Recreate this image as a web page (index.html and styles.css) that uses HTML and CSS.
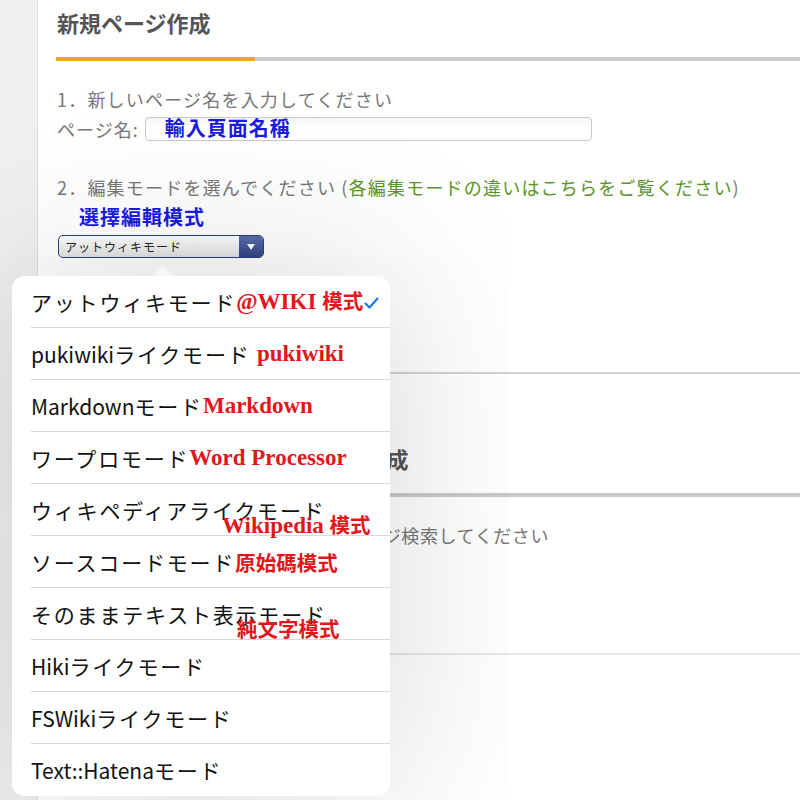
FILE: index.html
```html
<!DOCTYPE html>
<html lang="ja">
<head>
<meta charset="utf-8">
<title>新規ページ作成</title>
<link rel="stylesheet" href="styles.css">
</head>
<body>
<div class="page">
  <div class="side"></div>
  <main class="main">
    <section class="card card-first">
      <h2 class="card-title">新規ページ作成</h2>
      <div class="bar bar-progress"></div>
      <p class="step">1．新しいページ名を入力してください</p>
      <div class="name-row">
        <span class="label">ページ名:</span>
        <div class="input"><span class="note-blue">輸入頁面名稱</span></div>
      </div>
      <p class="step step-two">2．編集モードを選んでください (<span class="link">各編集モードの違いはこちらをご覧ください</span>)</p>
      <div class="note-blue note-mode">選擇編輯模式</div>
      <div class="select">
        <span class="select-text">アットウィキモード</span>
        <span class="select-btn"><svg width="10" height="8" viewBox="0 0 10 8"><path d="M1 1 H9 L5 7 Z" fill="#fff"/></svg></span>
      </div>
    </section>
    <section class="card card-second">
      <h2 class="card-title">既存ページの検索・編集・新規作成</h2>
      <div class="bar"></div>
      <p class="step step-search">1．ページ名を入力するか、またはページ検索してください</p>
    </section>
  </main>
</div>

<div class="popover">
  <div class="pop-arrow"></div>
  <ul class="menu">
    <li class="item">アットウィキモード<span class="red">@WIKI <span class="zh">模式</span></span><svg class="check" width="15" height="12" viewBox="0 0 15 12"><path d="M1.5 6.5 L5.5 10.5 L13.5 1.5" fill="none" stroke="#1a7be8" stroke-width="2.2" stroke-linecap="round" stroke-linejoin="round"/></svg></li>
    <li class="item"><span class="lat">pukiwiki</span>ライクモード <span class="red">pukiwiki</span></li>
    <li class="item"><span class="lat">Markdown</span>モード<span class="red">Markdown</span></li>
    <li class="item">ワープロモード<span class="red">Word Processor</span></li>
    <li class="item">ウィキペディアライクモード<span class="red red-float red-wiki">Wikipedia <span class="zh">模式</span></span></li>
    <li class="item">ソースコードモード<span class="red zh red-low">原始碼模式</span></li>
    <li class="item">そのままテキスト表示モード<span class="red zh red-float red-text">純文字模式</span></li>
    <li class="item"><span class="lat">Hiki</span>ライクモード</li>
    <li class="item"><span class="lat">FSWiki</span>ライクモード</li>
    <li class="item item-last"><span class="lat">Text::Hatena</span>モード</li>
  </ul>
</div>
</body>
</html>
```

FILE: styles.css
```css
* { box-sizing: border-box; }

html, body {
  margin: 0;
  padding: 0;
  height: 800px;
  overflow: hidden;
}

body {
  background: #efefef;
  font-family: "Noto Sans CJK JP", "Noto Sans", sans-serif;
  position: relative;
}

.page {
  display: flex;
  min-height: 800px;
}

.side {
  width: 37px;
  flex: none;
  background: #f0f0f0;
}

.main {
  flex: 1;
  background: #ffffff;
  border-left: 1px solid #dcdcdc;
}

.card {
  padding-left: 18px;
}

.card-first {
  padding-top: 8px;
  padding-bottom: 114px;
  border-bottom: 2px solid #d3d3d3;
}

.card-second {
  padding-top: 70px;
  padding-bottom: 106px;
  border-bottom: 2px solid #e6e6e6;
}

.card-title {
  margin: 0;
  font-size: 22px;
  line-height: 28px;
  font-weight: 700;
  color: #555555;
  padding-left: 1px;
}

.bar {
  margin-top: 21px;
  height: 4px;
  background: #cacaca;
}

.bar-progress {
  background: linear-gradient(to right, #f2a61c 0, #f2a61c 199px, #cdcdcd 199px);
}

.step {
  margin: 26px 0 0;
  font-size: 18px;
  line-height: 24px;
  letter-spacing: 1.2px;
  color: #777777;
  padding-left: 1px;
}

.step-search {
  letter-spacing: 0.6px;
}

.step-two {
  margin-top: 33px;
}

.link {
  color: #5b9526;
}

.name-row {
  display: flex;
  align-items: center;
  gap: 6px;
  margin-top: 5px;
  height: 26px;
  padding-left: 1px;
}

.label {
  font-size: 18px;
  letter-spacing: 1px;
  color: #777777;
}

.input {
  width: 447px;
  height: 24px;
  border: 1px solid #cacaca;
  border-radius: 4px;
  background: linear-gradient(#f4f4f4, #ffffff 40%);
  padding-left: 19px;
  display: flex;
  align-items: center;
  overflow: visible;
}

.note-blue {
  font-family: "Liberation Serif", "Noto Sans CJK TC", serif;
  font-weight: 700;
  color: #1b1be3;
  font-size: 20px;
  line-height: 26px;
  letter-spacing: 1px;
}

.note-mode {
  margin-top: 6px;
  padding-left: 23px;
}

.select {
  margin-top: 4px;
  margin-left: 2px;
  width: 206px;
  height: 23px;
  border: 1px solid #2f3f78;
  border-radius: 5px;
  background: linear-gradient(#ffffff, #e2e2e2);
  display: flex;
  align-items: center;
  overflow: hidden;
}

.select-text {
  flex: 1;
  padding-left: 6px;
  font-size: 12px;
  letter-spacing: 1px;
  color: #222222;
}

.select-btn {
  width: 24px;
  height: 100%;
  background: linear-gradient(#5b6fae, #2f4284);
  display: flex;
  align-items: center;
  justify-content: center;
}

/* popover menu */
.popover {
  position: absolute;
  left: 12px;
  top: 276px;
  width: 378px;
  background: #ffffff;
  border-radius: 13px;
  box-shadow: 0 0 170px rgba(0, 0, 0, 0.17);
}

.pop-arrow {
  position: absolute;
  left: 139px;
  top: -10px;
  width: 0;
  height: 0;
  border-left: 12px solid transparent;
  border-right: 12px solid transparent;
  border-bottom: 10px solid #f6f6f6;
}

.menu {
  list-style: none;
  margin: 0;
  padding: 0;
}

.item {
  position: relative;
  margin-left: 19px;
  height: 52px;
  border-bottom: 1px solid #d9d9d9;
  display: flex;
  align-items: center;
  font-size: 21px;
  letter-spacing: 1.8px;
  color: #111111;
  white-space: pre;
}

.lat {
  letter-spacing: 0;
}

.item-last {
  border-bottom: none;
}

.red {
  font-family: "Liberation Serif", "Noto Sans CJK TC", serif;
  font-weight: 700;
  font-size: 23px;
  line-height: 26px;
  letter-spacing: 0;
  color: #e2161b;
}

.zh {
  font-size: 20.5px;
}

.red-low {
  position: relative;
  top: 2px;
}

.red-float {
  position: absolute;
  top: 29px;
}

.red-wiki {
  left: 191px;
}

.red-text {
  left: 206px;
}

.check {
  margin-left: 1px;
  margin-top: 2px;
}
```
